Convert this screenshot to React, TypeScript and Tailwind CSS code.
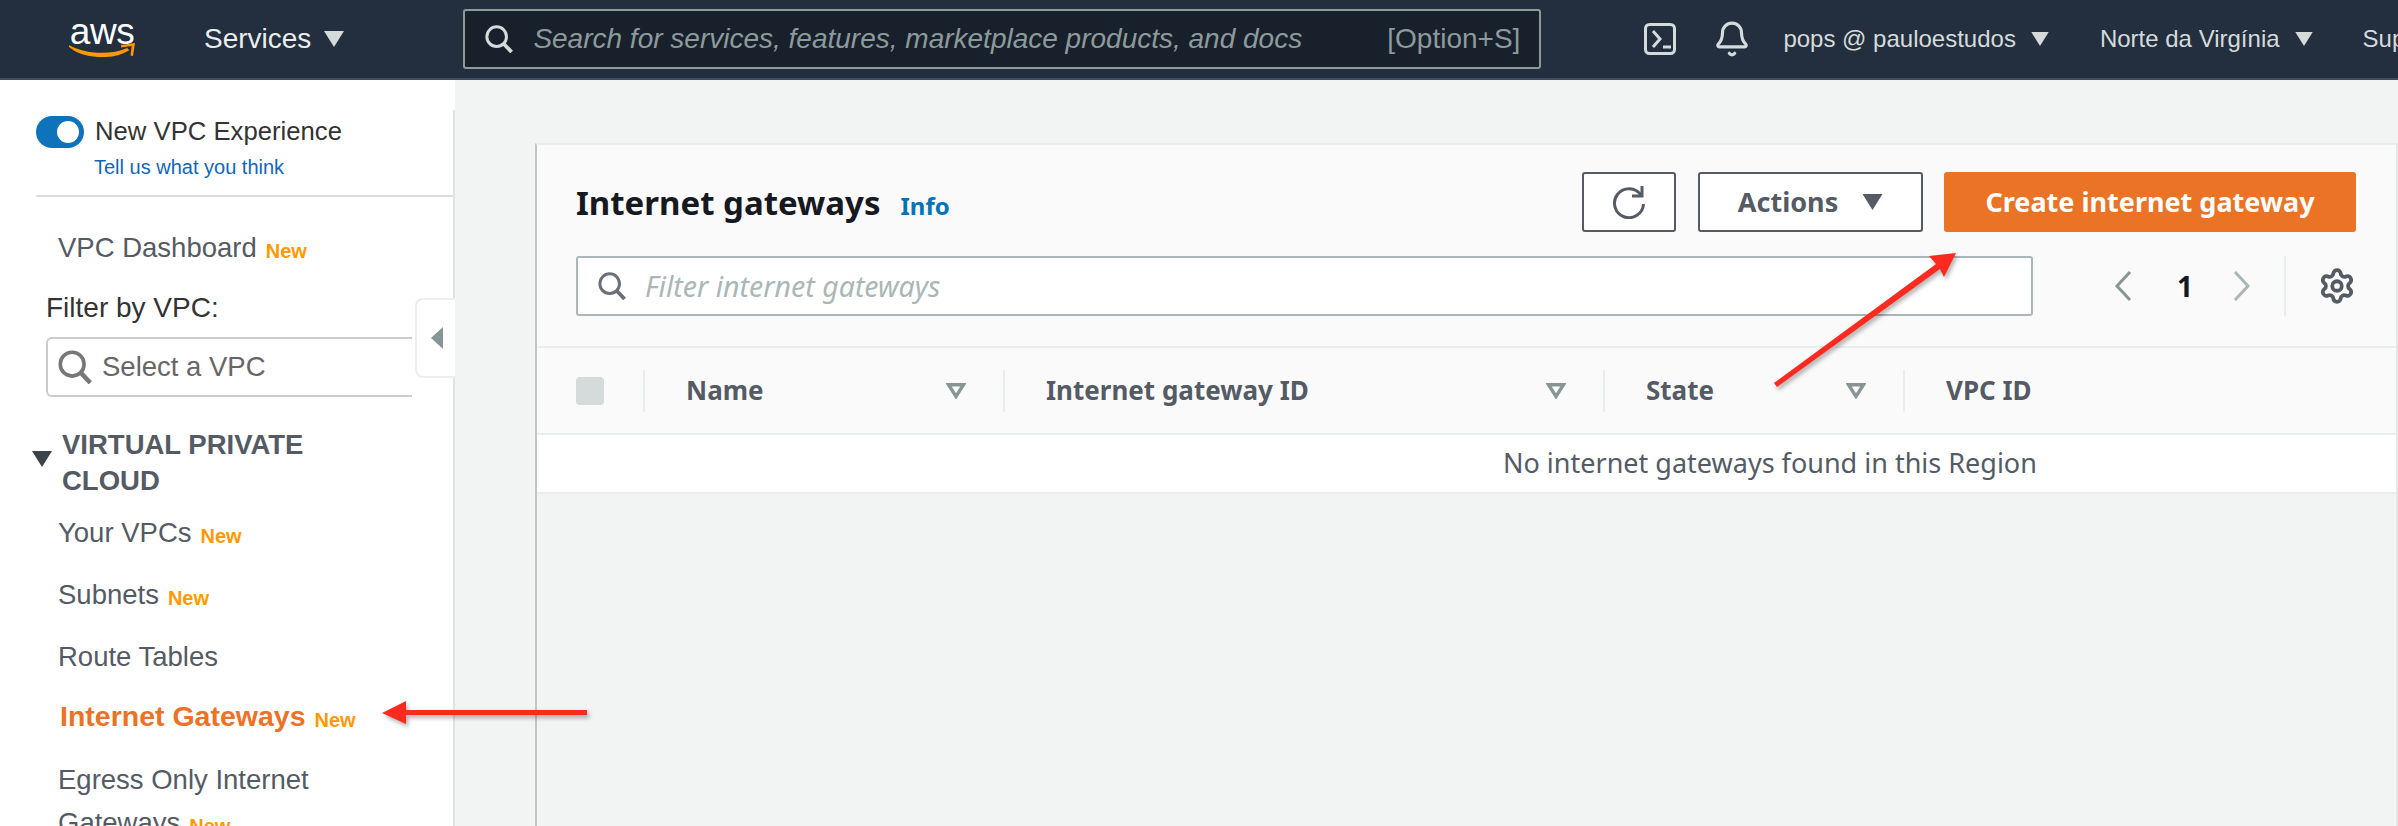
import React from "react";
import { Bell, Settings } from "lucide-react";

const SANS = "font-['Liberation_Sans',Arial,sans-serif]";
const EMBER = "font-['Noto_Sans',sans-serif]";

const Caret = ({ className }: { className: string }) => (
  <svg viewBox="0 0 20 16" className={className} fill="currentColor">
    <path d="M0 0h20L10 16z" />
  </svg>
);

const SearchGlyph = ({ className }: { className: string }) => (
  <svg viewBox="0 0 30 30" className={className} fill="none" stroke="currentColor" strokeWidth="3.2">
    <circle cx="12.5" cy="12.5" r="10.5" />
    <path d="M20 20l8.5 9" strokeWidth="4" />
  </svg>
);

const NewTag = () => <span className="ml-[9px] text-[20px] font-bold text-[#ff9900] relative top-[1px]">New</span>;

const FilterCaret = () => (
  <svg viewBox="0 0 20 16" className="w-5 h-4 text-[#879596]" fill="none" stroke="currentColor" strokeWidth="3.4">
    <path d="M2.5 1.7h15L10 13.4z" />
  </svg>
);

const NavItem = ({ label, tag, rowClass }: { label: string; tag?: boolean; rowClass: string }) => (
  <div className={`text-[27.5px] text-[#545b64] pl-[58px] ${rowClass}`}>
    {label}
    {tag && <NewTag />}
  </div>
);

const columns = [
  { name: "Name", width: "w-[360px]" },
  { name: "Internet gateway ID", width: "w-[600px]" },
  { name: "State", width: "w-[300px]" },
];

const App = () => {
  return (
    <div className={`relative w-[2398px] h-[826px] overflow-hidden bg-[#f2f3f3] ${SANS}`}>
      {/* top bar */}
      <header className="flex items-center h-[80px] bg-[#232f3e] border-b-2 border-[#434d58] text-[#d5dbdb] text-[28px] whitespace-nowrap">
        <div className="w-[204px] pl-[69px] shrink-0">
          <div className="relative w-[66px] h-[40px] -mt-[2px]">
            <span className="block text-center text-[37px] leading-[28px] tracking-[-0.5px] text-white">aws</span>
            <svg viewBox="0 0 66 14" className="absolute left-0 top-[25px] w-[66px] h-[14px]" fill="#ff9900">
              <path d="M0 3C15 12 42 13 58 6l1 1C44 16 14 16 0 3z" stroke="#ff9900" strokeWidth="1.5" />
              <path d="M52 2l14-2-2 13-2.500-.5 1.200-9.500-10.500 1.500z" />
            </svg>
          </div>
        </div>
        <span className="text-[#eaeded]">Services</span>
        <Caret className="w-5 h-4 ml-[13px] shrink-0 text-[#d5dbdb]" />
        <div className="ml-[119px] flex items-center shrink-0 w-[1078px] h-[60px] bg-[#18202b] border-2 border-[#8d9a9b] rounded-[3px] text-[#8d9a9b]">
          <SearchGlyph className="w-[28px] h-[28px] ml-[20px] text-[#d5dbdb]" />
          <span className="ml-[20px] italic">Search for services, features, marketplace products, and docs</span>
          <span className="ml-auto mr-[19px]">[Option+S]</span>
        </div>
        <svg viewBox="0 0 32 32" className="ml-[103px] w-8 h-8 shrink-0 text-[#d5dbdb]" fill="none" stroke="currentColor" strokeWidth="3">
          <rect x="1.500" y="1.500" width="29" height="29" rx="4" />
          <path d="M9 8l7 8-7 8M19 24h8" />
        </svg>
        <Bell className="ml-[37px] w-[38px] h-[38px] shrink-0 text-[#d5dbdb]" strokeWidth={2} />
        <span className="ml-[32px] text-[24px]">pops @ pauloestudos</span>
        <Caret className="w-[18px] h-[14px] ml-[15px] shrink-0 text-[#d5dbdb]" />
        <span className="ml-[51px] text-[24px]">Norte da Virgínia</span>
        <Caret className="w-[18px] h-[14px] ml-[15px] shrink-0 text-[#d5dbdb]" />
        <span className="ml-[50px] text-[24px]">Support</span>
      </header>

      <div className="flex h-[746px]">
        {/* sidebar */}
        <aside className="relative w-[455px] shrink-0 bg-white">
          <div className="absolute right-0 top-[30px] bottom-0 w-[2px] bg-[#e2e2e2]" />
          <div className="ml-[36px] mt-[36px] h-[81px] border-b-2 border-[#dddddd]">
            <div className="flex items-center gap-[11px]">
              <div className="flex justify-end items-center w-[48px] h-[32px] rounded-full bg-[#0f73bb] pr-[5px]">
                <div className="w-[22px] h-[22px] rounded-full bg-white" />
              </div>
              <span className="text-[25.700px] leading-[32px] -mt-[2px] text-[#333333]">New VPC Experience</span>
            </div>
            <div className="ml-[58px] mt-[7px] text-[20px] leading-[24px] text-[#1166bb]">Tell us what you think</div>
          </div>
          <div className="mt-[20px]">
            <NavItem label="VPC Dashboard" tag rowClass="leading-[61px]" />
          </div>
          <div className="pl-[46px] -mt-[2px] text-[28px] leading-[58px] text-[#333333]">Filter by VPC:</div>
          <div className="ml-[46px] w-[366px] h-[60px] flex items-center border-2 border-r-0 border-[#cccccc] rounded-l-[6px] text-[#666666]">
            <SearchGlyph className="w-[34px] h-[34px] ml-[10px] text-[#777777]" />
            <span className="ml-[10px] text-[27.500px]">Select a VPC</span>
          </div>
          <div className="flex mt-[30px]">
            <Caret className="w-[20px] h-4 ml-[32px] mt-[24px] text-[#3a424c]" />
            <div className="ml-[10px] text-[27.500px] leading-[36px] font-bold text-[#545b64]">
              VIRTUAL PRIVATE
              <br />
              CLOUD
            </div>
          </div>
          <div className="mt-[4px]">
            <NavItem label="Your VPCs" tag rowClass="leading-[60px]" />
            <NavItem label="Subnets" tag rowClass="leading-[60px]" />
            <NavItem label="Route Tables" rowClass="leading-[60px]" />
            <div className="text-[28.500px] leading-[59px] font-bold text-[#ec7225] pl-[60px]">
              Internet Gateways
              <NewTag />
            </div>
            <div className="mt-[9px] pl-[58px] text-[27.500px] leading-[43px] text-[#545b64]">
              Egress Only Internet
              <br />
              Gateways
              <NewTag />
            </div>
          </div>
          {/* collapse handle */}
          <div className="absolute left-[415px] top-[218px] w-[40px] h-[80px] flex items-center justify-center bg-white border-2 border-r-0 border-[#eeeeee] rounded-l-[8px]">
            <svg viewBox="0 0 12 22" className="w-3 h-[22px] text-[#879596] ml-[2px]" fill="currentColor">
              <path d="M12 0v22L0 11z" />
            </svg>
          </div>
        </aside>

        {/* main */}
        <main className="relative flex-1 pl-[80px] pt-[63px]">
          <div className={`h-full border-l-2 border-[#c4c6c6] border-t-2 border-t-[#eaeded] border-r-2 border-r-[#e6e8e8] ${EMBER}`}>
            <div className="bg-[#fafafa]">
              <div className="h-[203px] pl-[39px] pr-[40px] pt-[27px] border-b-2 border-[#eaeded]">
                <div className="flex items-center h-[60px]">
                  <h1 className="text-[33px] font-bold mt-[2px] text-[#16191f]">Internet gateways</h1>
                  <span className="ml-[20px] mt-[8px] text-[24px] font-bold text-[#0073bb]">Info</span>
                  <button className="ml-auto w-[94px] h-[60px] flex items-center justify-center bg-white border-2 border-[#545b64] rounded-[3px]">
                    <svg viewBox="0 0 34 34" className="w-[34px] h-[34px] text-[#545b64]" fill="none" stroke="currentColor" strokeWidth="3">
                      <path d="M29 10A14.500 14.500 0 1 0 31.500 19" />
                      <path d="M30 1v10H20" />
                    </svg>
                  </button>
                  <button className="ml-[22px] w-[225px] h-[60px] flex items-center justify-center bg-white border-2 border-[#545b64] rounded-[3px] text-[27px] font-bold text-[#545b64]">
                    Actions
                    <Caret className="w-[21px] h-4 ml-[24px] text-[#545b64]" />
                  </button>
                  <button className="ml-[21px] w-[412px] h-[60px] bg-[#ea7326] rounded-[3px] text-[27px] font-bold text-white">
                    Create internet gateway
                  </button>
                </div>
                <div className="flex items-center mt-[24px] h-[60px]">
                  <div className="flex items-center w-[1457px] h-[60px] bg-white border-2 border-[#aab7b8] rounded-[3px]">
                    <SearchGlyph className="w-[28px] h-[28px] ml-[20px] text-[#687078]" />
                    <span className="ml-[19px] text-[28.500px] italic text-[#aab7b8]">Filter internet gateways</span>
                  </div>
                  <svg viewBox="0 0 18 30" className="ml-[81px] w-[18px] h-[30px] text-[#879596]" fill="none" stroke="currentColor" strokeWidth="3">
                    <path d="M16 1L3 15l13 14" />
                  </svg>
                  <span className="ml-[45px] w-[12px] text-[28px] font-bold text-[#16191f] text-center">1</span>
                  <svg viewBox="0 0 18 30" className="ml-[44px] w-[18px] h-[30px] text-[#aab7b8]" fill="none" stroke="currentColor" strokeWidth="3">
                    <path d="M2 1l13 14L2 29" />
                  </svg>
                  <div className="ml-[33px] w-[2px] h-[60px] bg-[#eaeded]" />
                  <Settings className="ml-[32px] w-[38px] h-[38px] text-[#545b64]" strokeWidth={2.400} />
                </div>
              </div>
              <div className="flex items-center h-[87px] border-b-2 border-[#eaeded] text-[26px] font-bold text-[#545b64]">
                <div className="w-[108px] h-[42px] flex items-center pl-[39px] border-r-2 border-[#eaeded] shrink-0">
                  <div className="w-[28px] h-[28px] bg-[#d5dbdb] rounded-[4px]" />
                </div>
                {columns.map((col) => (
                  <div
                    key={col.name}
                    className={`${col.width} h-[42px] flex items-center justify-between pl-[41px] pr-[37px] border-r-2 border-[#eaeded] shrink-0`}
                  >
                    {col.name}
                    <FilterCaret />
                  </div>
                ))}
                <div className="pl-[41px]">VPC ID</div>
              </div>
            </div>
            <div className="h-[59px] flex items-center bg-white border-b-2 border-[#eaeded] pl-[966px] text-[27px] text-[#545b64] whitespace-nowrap">
              No internet gateways found in this Region
            </div>
          </div>
        </main>
      </div>

      {/* annotation arrows */}
      <svg className="absolute left-[382px] top-[698px] w-[210px] h-[34px] drop-shadow-[2px_3px_2px_rgba(0,0,0,0.3)]" viewBox="0 0 210 34" fill="#ff2a1f">
        <path d="M0 15L24 3v9h181v5H24v9z" />
      </svg>
      <svg className="absolute left-[1770px] top-[248px] w-[192px] h-[144px] drop-shadow-[2px_3px_2px_rgba(0,0,0,0.3)]" viewBox="0 0 192 144" fill="#ff2a1f">
        <path d="M186 5l-27 3 7 8L4 135l3 4L170 21l4 8z" />
      </svg>
    </div>
  );
};

export default App;
